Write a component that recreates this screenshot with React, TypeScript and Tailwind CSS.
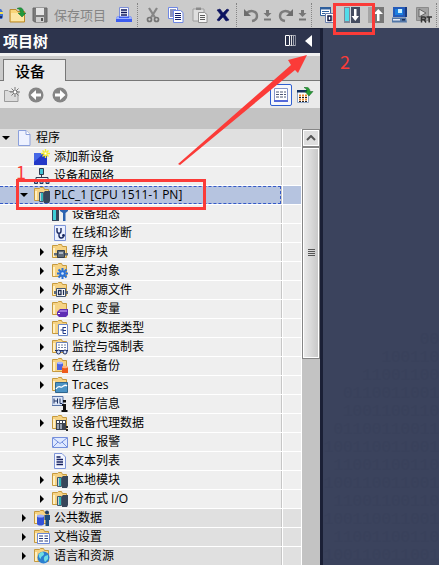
import type { ReactNode } from 'react';

const FONT = "font-['Open_Sans','Noto_Sans_CJK_SC',sans-serif]";

function Icon({ children, w = 16 }: { children: ReactNode; w?: number }) {
  return (
    <svg width={w} height={16} viewBox={`0 0 ${w} 16`} className="block shrink-0" aria-hidden="true">
      {children}
    </svg>
  );
}

/* ---------- toolbar drawings ---------- */

const Globe = () => (
  <Icon w={3}>
    <path d="M0 2h1l2 3v5l-1 2H0z" fill="#3f6fd0" />
    <path d="M0 5h3v2H0z" fill="#f2e25a" />
    <path d="M0 9h2v2H0z" fill="#25305c" />
  </Icon>
);

const OpenProject = () => (
  <Icon w={18}>
    <path d="M1 2.500h6l1.500 2h7v10.500H1z" fill="#f9d57a" stroke="#b98a2c" />
    <path d="M2 6h13v8H2z" fill="#fde6a4" />
    <path d="M8 1.500c4-2 7 0 6.500 4.500H17l-4 4-4-4h2.500C11.500 3.500 10.500 2 8 1.500z" fill="#1f9a3c" stroke="#0f6a2a" strokeWidth=".5" />
  </Icon>
);

const Floppy = () => (
  <Icon>
    <path d="M1 1h14v14H2.500L1 13.500z" fill="#7b7b7b" stroke="#666" />
    <path d="M4 1h8v7H4z" fill="#e4e4e4" />
    <path d="M4 10h8v5H4z" fill="#cfcfcf" />
    <path d="M9 11h2v3H9z" fill="#555" />
  </Icon>
);

const Printer = () => (
  <Icon>
    <path d="M3.500.500h9v10h-9z" fill="#f7f8ff" stroke="#7d8fd8" />
    <path d="M5 3h6M5 5.500h6M5 8h6" stroke="#10185c" strokeWidth="1.500" />
    <path d="M1 9.500h14l1 2.500v3H0v-3z" fill="#3c5cf0" />
    <path d="M1 9.500h2v1.500h10V9.500h2l1 2.500H0z" fill="#9db2ff" />
  </Icon>
);

const Scissors = () => (
  <Icon w={14}>
    <path d="M3 1l6 9.500M11 1L5 10.500" stroke="#868686" strokeWidth="2.200" />
    <circle cx="3.500" cy="12.500" r="2" fill="none" stroke="#747474" strokeWidth="1.700" />
    <circle cx="10.500" cy="12.500" r="2" fill="none" stroke="#747474" strokeWidth="1.700" />
  </Icon>
);

const Copy = () => (
  <Icon>
    <path d="M.500.500h9v11h-9z" fill="#fff" stroke="#6f88e4" />
    <path d="M2 3h6M2 5h6M2 7h6M2 9h6" stroke="#1b2a7a" />
    <path d="M5.500 3.500h7l2.500 2v10H5.500z" fill="#fff" stroke="#6f88e4" />
    <path d="M7 6.500h6M7 8.500h6M7 10.500h6M7 12.500h6" stroke="#121f6c" />
  </Icon>
);

const Paste = () => (
  <Icon>
    <path d="M1 2h11v12H1z" fill="#dedede" stroke="#9d9d9d" />
    <path d="M4 .500h5V3H4z" fill="#8a8a8a" />
    <path d="M6.500 5.500h6l2.500 2v8H6.500z" fill="#f5f5f5" stroke="#909090" />
    <path d="M8 8.500h5M8 10.500h5M8 12.500h5" stroke="#5c5c5c" />
  </Icon>
);

const Cross = () => (
  <Icon w={14}>
    <path d="M1 3l3-1 3 4 4-4 2 1-4 5 4 5-3 1-3-4-4 4-2-1 4-5z" fill="#0b1260" stroke="#0b1260" strokeWidth=".6" />
  </Icon>
);

const Undo = () => (
  <Icon>
    <path d="M3.500 6C8 2.500 14 4 14 9c0 3-2 4.500-5 5" fill="none" stroke="#7c7c7c" strokeWidth="2.400" />
    <path d="M1 2v7h7z" fill="#6d6d6d" />
  </Icon>
);

const Redo = () => (
  <Icon>
    <path d="M12.500 6C8 2.500 2 4 2 9c0 3 2 4.500 5 5" fill="none" stroke="#7c7c7c" strokeWidth="2.400" />
    <path d="M15 2v7H8z" fill="#6d6d6d" />
  </Icon>
);

const DownBar = () => (
  <Icon w={9}>
    <path d="M3 3h3v3h2.500l-4 4-4-4H3z" fill="#777" />
    <path d="M1 11.500h7v2H1z" fill="#777" />
  </Icon>
);

const Compile = () => (
  <Icon>
    <path d="M.500.500h10v8H.500z" fill="#fff" stroke="#2f5f9c" />
    <path d="M0 0h11v2.500H0z" fill="#2f5f9c" />
    <path d="M2 4.500h7M2 6.500h3" stroke="#2f5f9c" />
    <path d="M5.500 6.500h10v9h-10z" fill="#fff" stroke="#6a7fae" />
    <path d="M8 9h3v4.500H8zM13.500 8.500V14" fill="none" stroke="#0e1744" strokeWidth="1.500" />
  </Icon>
);

const Download = () => (
  <Icon>
    <path d="M0 0h16v16H0z" fill="#434b60" />
    <path d="M0 0h6v16H0z" fill="#7d8899" />
    <path d="M1 1h4v13H1z" fill="#53dcea" />
    <path d="M6 0h1v16H6z" fill="#d5dae2" />
    <path d="M10 2h2.500v7H15l-3.700 5L7.500 9H10z" fill="#fff" />
  </Icon>
);

const Upload = () => (
  <Icon>
    <path d="M0 0h16v16H0z" fill="#777" />
    <path d="M0 0h4v16H0z" fill="#a5a5a5" />
    <path d="M4 0h1v16H4z" fill="#ddd" />
    <path d="M9 14h2.500V7H15l-4.700-5L5.500 7H9z" fill="#fff" />
  </Icon>
);

const Computer = () => (
  <Icon>
    <path d="M1 0h12v10H1z" fill="#245ab8" />
    <path d="M13 0h2v10h-2z" fill="#173a80" />
    <path d="M3 2h8v6H3z" fill="#1b7fe0" />
    <path d="M6 2h4v4H6z" fill="#c9f2ff" />
    <path d="M0 10.500h14l1 5H0z" fill="#5277a8" />
    <path d="M1 12h7v1.500H1z" fill="#e6edf8" />
    <path d="M10 12h3v1.500h-3z" fill="#1a2e55" />
  </Icon>
);

const Runtime = () => (
  <Icon>
    <path d="M.500.500h12v13H.500z" fill="#a2a2a2" stroke="#8b8b8b" />
    <path d="M3 2l7 4-7 4z" fill="#dadada" stroke="#666" />
    <path d="M5.500 15.500V10h2.500c2 0 2 2.500 0 2.500H6M8 12.500l2 3M10.500 10H16M13.200 10v5.500" fill="none" stroke="#333" strokeWidth="1.500" />
  </Icon>
);

/* ---------- tree drawings ---------- */

function Folder({ children }: { children?: ReactNode }) {
  return (
    <Icon>
      <path d="M.500 1.500h5l1-1h3l1 2h4v11H.500z" fill="#f6d384" stroke="#c79a3d" />
      <path d="M1 4h2v9H1z" fill="#fff0c4" />
      {children}
    </Icon>
  );
}

const Module = () => (
  <>
    <path d="M5.500 5.500h4v9h-4z" fill="#c3ced8" stroke="#44566a" />
    <path d="M7 6h2v8H7z" fill="#2fb4b8" />
    <path d="M10 5l1-1h5v10l-1 2h-5z" fill="#37465a" />
  </>
);

const ICONS: Record<string, ReactNode> = {
  page: (
    <Icon>
      <path d="M2.500.500h7.500l4 4v11H2.500z" fill="#eef2ff" stroke="#8ba0dc" />
      <path d="M10 .500v4h4" fill="#fff" stroke="#8ba0dc" />
    </Icon>
  ),
  add: (
    <Icon>
      <path d="M0 4h13v12H0z" fill="#2338c8" />
      <path d="M0 4h10L0 13z" fill="#4668e6" />
      <path d="M11.500 0v9M7 4.500h9M8.500 1.500l6 6M14.500 1.500l-6 6" stroke="#f5e92f" strokeWidth="1.400" />
      <path d="M10.500 3.500h2v2h-2z" fill="#fff" />
    </Icon>
  ),
  network: (
    <Icon>
      <path d="M5.500.500h4v6h-4z" fill="#3fc3d4" stroke="#2a3a50" />
      <path d="M7.500 7v3M2 11V9.500h12V11" fill="none" stroke="#2a3a50" />
      <path d="M.500 11.500h3v4h-3zM6 11.500h3v4H6zM12 11.500h3v4h-3z" fill="#7fa0c8" stroke="#26385a" />
    </Icon>
  ),
  plc: <Folder><Module /></Folder>,
  config: (
    <Icon>
      <path d="M0 1h7v14H0z" fill="#35465c" />
      <path d="M1 2h3v12H1z" fill="#3fd0d8" />
      <path d="M8 1v4l3 2v8h2.500V7L16 5V1h-2v3h-3.500V1z" fill="#2b62b0" />
    </Icon>
  ),
  diag: (
    <Icon>
      <path d="M2.500.500h11v15h-11z" fill="#eaf0ff" stroke="#7e95d8" />
      <path d="M5 3v3c0 3 4 3 4 0V3M7 8.500v2c0 3.500 4 3 4.500 1" fill="none" stroke="#17265e" strokeWidth="1.400" />
      <circle cx="11.500" cy="10.500" r="1.400" fill="#17265e" />
    </Icon>
  ),
  blocks: (
    <Folder>
      <path d="M2 9h14v2.500H2z" fill="#5f6a78" />
      <path d="M5.500 6.500h7v7h-7z" fill="#5f6a78" stroke="#343f4e" />
      <path d="M7 8h4v2H7z" fill="#a9b5c2" />
    </Folder>
  ),
  gear: (
    <Folder>
      <path d="M10.500 5v11M5 10.500h11M6.500 6.500l8 8M14.500 6.500l-8 8" stroke="#2870d8" strokeWidth="2" />
      <circle cx="10.500" cy="10.500" r="3" fill="#2870d8" />
      <circle cx="10.500" cy="10.500" r="1.300" fill="#d8ebff" />
    </Folder>
  ),
  source: (
    <Folder>
      <path d="M2 9h14v3H2z" fill="#5f6a78" />
      <path d="M4.500 6.500h9v8h-9z" fill="#fff" stroke="#46566e" />
      <path d="M6.500 8.500H9v4H6.500zM11.500 8v5" fill="none" stroke="#1d2c50" strokeWidth="1.300" />
    </Folder>
  ),
  tag: (
    <Folder>
      <path d="M5 11l3-3h8v6l-2 2H7l-2-2z" fill="#5f2db4" />
      <path d="M8 9h7v2H7z" fill="#9a6fdc" />
      <path d="M6 12h2v1H6z" fill="#fff" />
    </Folder>
  ),
  types: (
    <Folder>
      <path d="M6.500 4.500h9v11h-9z" fill="#fff" stroke="#6c88c8" />
      <path d="M8.500 10H11M11 7v6.500M11 7.500h3M11 10.500h3M11 13.500h3" fill="none" stroke="#203a88" />
    </Folder>
  ),
  watch: (
    <Folder>
      <path d="M4.500 3.500h11v9h-11z" fill="#fff" stroke="#6c84bc" />
      <path d="M6 6h8M6 8.500h8" stroke="#7385a4" strokeDasharray="2 1" />
      <path d="M3 11.500h13" stroke="#1c2c60" />
      <circle cx="6.500" cy="13" r="2" fill="#d6e4ff" stroke="#1c2c60" />
      <circle cx="13" cy="13" r="2" fill="#d6e4ff" stroke="#1c2c60" />
    </Folder>
  ),
  backup: (
    <Folder>
      <path d="M5 5h6v7H5z" fill="#4c62e0" />
      <ellipse cx="8" cy="5" rx="3" ry="1.200" fill="#a9b8ff" />
      <path d="M10 9h6v6h-6z" fill="#ee5a1c" />
      <ellipse cx="13" cy="9" rx="3" ry="1.200" fill="#ffb07c" />
    </Folder>
  ),
  traces: (
    <Folder>
      <path d="M3.500 5.500h12v10h-12z" fill="#4b93c4" stroke="#2f668f" />
      <path d="M4 12c3-5 4-1 6-2s3-3 5-1" fill="none" stroke="#fff" strokeWidth="1.300" />
    </Folder>
  ),
  info: (
    <Icon>
      <path d="M0 .500h11v9H0z" fill="#dce6f8" stroke="#5874a8" />
      <path d="M2 2.500v5M2 5h3M5.500 2.500v5M8 2.500v5h2" fill="none" stroke="#1c3060" />
      <path d="M11 4h3v2.500h-3zM10 8h4v6h1.500v2h-6v-2H11v-4h-1z" fill="#111" />
    </Icon>
  ),
  proxy: (
    <Folder>
      <path d="M4 5h10v10H4z" fill="#3d4450" />
      <path d="M5 6h2v2H5zM8 6h2v2H8zM11 6h2v2h-2z" fill="#fff" />
      <path d="M5 9h2v5H5zM8 9h2v5H8z" fill="#9aa3b0" />
      <path d="M14 11h2v2h-2zM14 14h2v2h-2z" fill="#222" />
    </Folder>
  ),
  mail: (
    <Icon>
      <path d="M.500 3.500h15v10H.500z" fill="#dfe9ff" stroke="#7690dc" />
      <path d="M1 4l7 5.500L15 4M1 13l5-5M15 13l-5-5" fill="none" stroke="#7690dc" />
    </Icon>
  ),
  text: (
    <Icon>
      <path d="M2.500.500h7.500l3.500 3.500v11.500h-11z" fill="#f3f6ff" stroke="#7e95d8" />
      <path d="M4.500 4h4M4.500 6.500H11M4.500 9H11M4.500 11.500H11" stroke="#141f5c" strokeWidth="1.400" />
    </Icon>
  ),
  common: (
    <Folder>
      <path d="M3 6h7v8c-1 2-6 2-7 0z" fill="#3452d8" />
      <ellipse cx="6.500" cy="6" rx="3.500" ry="1.500" fill="#9db0ff" />
      <circle cx="13" cy="2.500" r="2" fill="#1c3c68" />
      <path d="M10.500 5H16v5h-1v6h-3.500v-6h-1z" fill="#1d4c80" />
    </Folder>
  ),
  docs: (
    <Folder>
      <path d="M3.500 4.500h12v10h-12z" fill="#fff" stroke="#6c88d8" />
      <path d="M5 7h4M5 9.500h4M5 12h4M10.500 7H14M10.500 9.500H14M10.500 12H14" stroke="#25387c" />
    </Folder>
  ),
  lang: (
    <Folder>
      <circle cx="9.500" cy="9.500" r="6" fill="#2b7fd0" />
      <path d="M5 6c3-3 5-2 5 0s-3 2-3 4-3-1-2-4zM11 8l3-1v4l-3 3c-1-2-2-4 0-6z" fill="#6fdde4" />
    </Folder>
  ),
};

type Row = { label: string; icon: string; level: 0 | 1 | 2; arrow?: 'open' | 'closed'; dark?: boolean; selected?: boolean };

const ROWS: Row[] = [
  { label: '程序', icon: 'page', level: 0, arrow: 'open', dark: true },
  { label: '添加新设备', icon: 'add', level: 1 },
  { label: '设备和网络', icon: 'network', level: 1 },
  { label: 'PLC_1 [CPU 1511-1 PN]', icon: 'plc', level: 1, arrow: 'open', selected: true },
  { label: '设备组态', icon: 'config', level: 2 },
  { label: '在线和诊断', icon: 'diag', level: 2 },
  { label: '程序块', icon: 'blocks', level: 2, arrow: 'closed' },
  { label: '工艺对象', icon: 'gear', level: 2, arrow: 'closed' },
  { label: '外部源文件', icon: 'source', level: 2, arrow: 'closed' },
  { label: 'PLC 变量', icon: 'tag', level: 2, arrow: 'closed' },
  { label: 'PLC 数据类型', icon: 'types', level: 2, arrow: 'closed' },
  { label: '监控与强制表', icon: 'watch', level: 2, arrow: 'closed' },
  { label: '在线备份', icon: 'backup', level: 2, arrow: 'closed' },
  { label: 'Traces', icon: 'traces', level: 2, arrow: 'closed' },
  { label: '程序信息', icon: 'info', level: 2 },
  { label: '设备代理数据', icon: 'proxy', level: 2, arrow: 'closed' },
  { label: 'PLC 报警', icon: 'mail', level: 2 },
  { label: '文本列表', icon: 'text', level: 2 },
  { label: '本地模块', icon: 'plc', level: 2, arrow: 'closed' },
  { label: '分布式 I/O', icon: 'plc', level: 2, arrow: 'closed' },
  { label: '公共数据', icon: 'common', level: 1, arrow: 'closed', dark: true },
  { label: '文档设置', icon: 'docs', level: 1, arrow: 'closed', dark: true },
  { label: '语言和资源', icon: 'lang', level: 1, arrow: 'closed', dark: true },
];

const INDENT = { 0: 'pl-0', 1: 'pl-[18px]', 2: 'pl-9' };

function TreeRow({ row }: { row: Row }) {
  const bg = row.selected ? 'bg-[#b6c4e0]' : row.dark ? 'bg-[#e0e0e0]' : 'bg-[#efefef]';
  return (
    <li role="treeitem" aria-selected={!!row.selected} aria-level={row.level + 1} className="flex h-[19px] shrink-0 border-b border-white">
      <div
        className={`flex min-w-0 flex-1 items-center ${bg} ${INDENT[row.level]} ${
          row.selected ? 'border-y border-r border-dashed border-[#3459c8]' : ''
        }`}
      >
        <span className="flex w-4 shrink-0">
          {row.arrow && (
            <button type="button" aria-label={row.label} aria-expanded={row.arrow === 'open'} className="block">
              <svg width="12" height="10" viewBox="0 0 12 10" className="block">
                {row.arrow === 'open' ? <path d="M2 3h8L6 7z" fill="#000" /> : <path d="M4 1l4 4-4 4z" fill="#000" />}
              </svg>
            </button>
          )}
        </span>
        {ICONS[row.icon]}
        <span className={`ml-1 whitespace-nowrap text-xs leading-4 text-black ${row.selected ? 'font-medium' : ''}`}>{row.label}</span>
      </div>
      <div className="w-0.5 shrink-0 border-r border-white bg-[#c6c6c6]" />
      <div className={`w-[18px] shrink-0 ${bg}`} />
    </li>
  );
}

function Tool({ label, gap, children }: { label: string; gap: string; children: ReactNode }) {
  return (
    <button type="button" aria-label={label} className={`shrink-0 ${gap}`}>
      {children}
    </button>
  );
}

const Sep = ({ gap }: { gap: string }) => <span className={`h-6 shrink-0 border-l border-dotted border-[#858585] ${gap}`} />;

const BITS = ['00', '100110', '11001100', '0110011001', '1001100110', '01100110011', '100110011001', '11001100110', '100110011001', '11001100110', '100110011001', '11001100110', '100110011001'];

export default function App() {
  return (
    <div className={`relative flex h-screen flex-col overflow-hidden bg-[#cbcbcb] ${FONT}`}>
      <header className="flex h-7 shrink-0 items-center overflow-hidden bg-[#cbcbcb] pt-0.5">
        <Tool label="新建" gap=""><Globe /></Tool>
        <Tool label="打开项目" gap="ml-1.5"><OpenProject /></Tool>
        <button type="button" className="ml-[5px] flex shrink-0 items-center gap-1.5 text-[13px] leading-4 text-[#858585]">
          <Floppy />
          保存项目
        </button>
        <Tool label="打印" gap="ml-2.5"><Printer /></Tool>
        <Sep gap="ml-[5px]" />
        <Tool label="剪切" gap="ml-2"><Scissors /></Tool>
        <Tool label="复制" gap="ml-2"><Copy /></Tool>
        <Tool label="粘贴" gap="ml-2"><Paste /></Tool>
        <Tool label="删除" gap="ml-2"><Cross /></Tool>
        <Sep gap="ml-1.5" />
        <Tool label="撤销" gap="ml-1.5"><Undo /></Tool>
        <Tool label="撤销列表" gap="ml-1"><DownBar /></Tool>
        <Tool label="重做" gap="ml-1.5"><Redo /></Tool>
        <Tool label="重做列表" gap="ml-1"><DownBar /></Tool>
        <Sep gap="ml-1" />
        <Tool label="编译" gap="ml-2"><Compile /></Tool>
        <Tool label="下载到设备" gap="ml-2"><Download /></Tool>
        <Tool label="从设备上传" gap="ml-2"><Upload /></Tool>
        <Tool label="仿真" gap="ml-2"><Computer /></Tool>
        <Tool label="启动运行系统" gap="ml-2"><Runtime /></Tool>
        <Sep gap="ml-1" />
      </header>

      <div className="flex min-h-0 flex-1">
        <aside className="flex w-80 shrink-0 flex-col">
          <div className="flex h-[25px] shrink-0 items-center border-t border-[#1b2036] bg-[#2d344d] pl-[3px] pr-[7px]">
            <h1 className="flex-1 text-[15px] leading-6 font-bold text-white">项目树</h1>
            <button type="button" aria-label="分栏" className="mr-2">
              <svg width="12" height="12" viewBox="0 0 12 12" className="block">
                <path d="M.500.500h4v10h-4z" fill="none" stroke="#fff" />
                <path d="M4.500.500h6M4.500 10.500h6" stroke="#a4a8b4" />
                <path d="M6.500 0v11" stroke="#ddd" />
                <path d="M8.500 0v11" stroke="#a4a8b4" />
                <path d="M10.500 0v11" stroke="#878c9c" />
              </svg>
            </button>
            <button type="button" aria-label="折叠">
              <svg width="8" height="12" viewBox="0 0 8 12" className="block">
                <path d="M7 0v12L0 6z" fill="#fff" />
              </svg>
            </button>
          </div>

          <div role="tablist" className="flex h-7 shrink-0 items-end border-t-[3px] border-[#f1f1f1] bg-[#cbcbcb]">
            <span className="h-full w-[3px] border-b border-[#777]" />
            <button
              type="button"
              role="tab"
              aria-selected="true"
              className="h-[22px] w-[63px] border-x border-t border-[#777] bg-[#eaeaea] pl-[11px] text-left text-[15px] leading-5 font-medium text-black"
            >
              设备
            </button>
            <span className="h-full flex-1 border-b border-[#777]" />
          </div>

          <div className="flex h-[27px] shrink-0 items-center bg-[#eaeaea] pl-1 pr-1.5">
            <button type="button" aria-label="新建组">
              <Icon>
                <path d="M.500 3.500H4l1 1h9v10H.500z" fill="#dcdcdc" stroke="#9b9b9b" />
                <path d="M11 0v10M6 5h10M7.500 1.500l7 7M14.500 1.500l-7 7" stroke="#777" />
                <path d="M10 4h2v2h-2z" fill="#fff" />
              </Icon>
            </button>
            <button type="button" aria-label="后退" className="ml-2">
              <Icon>
                <circle cx="8" cy="8" r="7.500" fill="#858585" />
                <path d="M2.500 8L8 3v3.500h5v3H8V13z" fill="#fff" />
              </Icon>
            </button>
            <button type="button" aria-label="前进" className="ml-2">
              <Icon>
                <circle cx="8" cy="8" r="7.500" fill="#858585" />
                <path d="M13.500 8L8 3v3.500H3v3h5V13z" fill="#fff" />
              </Icon>
            </button>
            <span className="flex-1" />
            <button type="button" aria-label="列表视图" className="flex h-[22px] w-[22px] items-center justify-center rounded-xs border border-[#2f5fd0] bg-[#f6f7fb]">
              <Icon>
                <path d="M1.500 1.500h13v12h-13z" fill="#fff" stroke="#8494c8" />
                <path d="M1 14h14" stroke="#5468d8" strokeWidth="2" />
                <path d="M3 5h10M3 7.500h10M3 10h10" stroke="#4c5674" strokeDasharray="3 1" />
              </Icon>
            </button>
            <button type="button" aria-label="导出视图" className="ml-[5px]">
              <Icon w={17}>
                <path d="M.500 3.500h11v12H.500z" fill="#fff" stroke="#8fa6c8" />
                <path d="M0 3h10v2.500H0z" fill="#12305c" />
                <path d="M2 8.500h9M2 12.500h9" stroke="#e8862c" strokeWidth="2" strokeDasharray="2 1" />
                <path d="M2 10.500h9M2 14.500h9" stroke="#222" strokeDasharray="2 1" />
                <path d="M7 .500c4-1 6 1 6 4h3l-4 4.500L8 4.500h2c0-2-1-3-3-4z" fill="#279a36" stroke="#12641f" strokeWidth=".5" />
              </Icon>
            </button>
          </div>

          <div className="h-[21px] shrink-0 bg-[#c3c3c3]" />

          <div className="flex min-h-0 flex-1 overflow-hidden">
            <ul role="tree" aria-label="项目树" className="flex min-w-0 flex-1 flex-col border-r border-white">
              {ROWS.map((row) => (
                <TreeRow key={row.label} row={row} />
              ))}
            </ul>
            <div className="flex w-[18px] shrink-0 flex-col bg-[#c3c3c3]">
              <button type="button" aria-label="向上滚动" className="flex h-[18px] shrink-0 items-center justify-center border border-[#858585] bg-[#dedede] shadow-[inset_0_0_0_1px_#fff]">
                <svg width="10" height="6" viewBox="0 0 10 6">
                  <path d="M1 5l4-4 4 4" fill="none" stroke="#555" strokeWidth="2" />
                </svg>
              </button>
              <div className="flex h-[212px] shrink-0 items-center justify-center border border-[#858585] bg-linear-to-r from-[#ececec] to-[#c6c6c6] shadow-[inset_0_0_0_1px_#fff]">
                <svg width="7" height="8" viewBox="0 0 7 8">
                  <path d="M0 .500h7M0 2.500h7M0 4.500h7M0 6.500h7" stroke="#555" />
                </svg>
              </div>
            </div>
          </div>
        </aside>

        <main className="flex min-w-0 flex-1 flex-col justify-end overflow-hidden border-l-[3px] border-[#1b2036] bg-[#3b435d] text-right font-['Liberation_Mono',monospace] text-base leading-[18px] text-[#39415b]">
          {BITS.map((bits, i) => (
            <p key={i} aria-hidden="true">{bits}</p>
          ))}
        </main>
      </div>

      {/* step annotations drawn over the window */}
      <div className="pointer-events-none absolute top-[179px] left-4 h-[31px] w-[190px] border-[3px] border-[#fb3b38]" />
      <div className="pointer-events-none absolute top-[3px] left-[333px] h-8 w-[42px] border-[3px] border-[#fb3b38]" />
      <span className="absolute top-[161px] left-4 font-['Noto_Sans_CJK_SC',sans-serif] text-lg leading-5 text-[#fb3b38]">1</span>
      <span className="absolute top-[51px] left-[340px] font-['Noto_Sans_CJK_SC',sans-serif] text-lg leading-5 text-[#fb3b38]">2</span>
      <svg className="pointer-events-none absolute top-0 left-0" width="320" height="180" viewBox="0 0 320 180" aria-hidden="true">
        <path d="M178 164L291 65l-3-5 19-5-9 18-3-3L180 165z" fill="#fb3b38" />
      </svg>
    </div>
  );
}
